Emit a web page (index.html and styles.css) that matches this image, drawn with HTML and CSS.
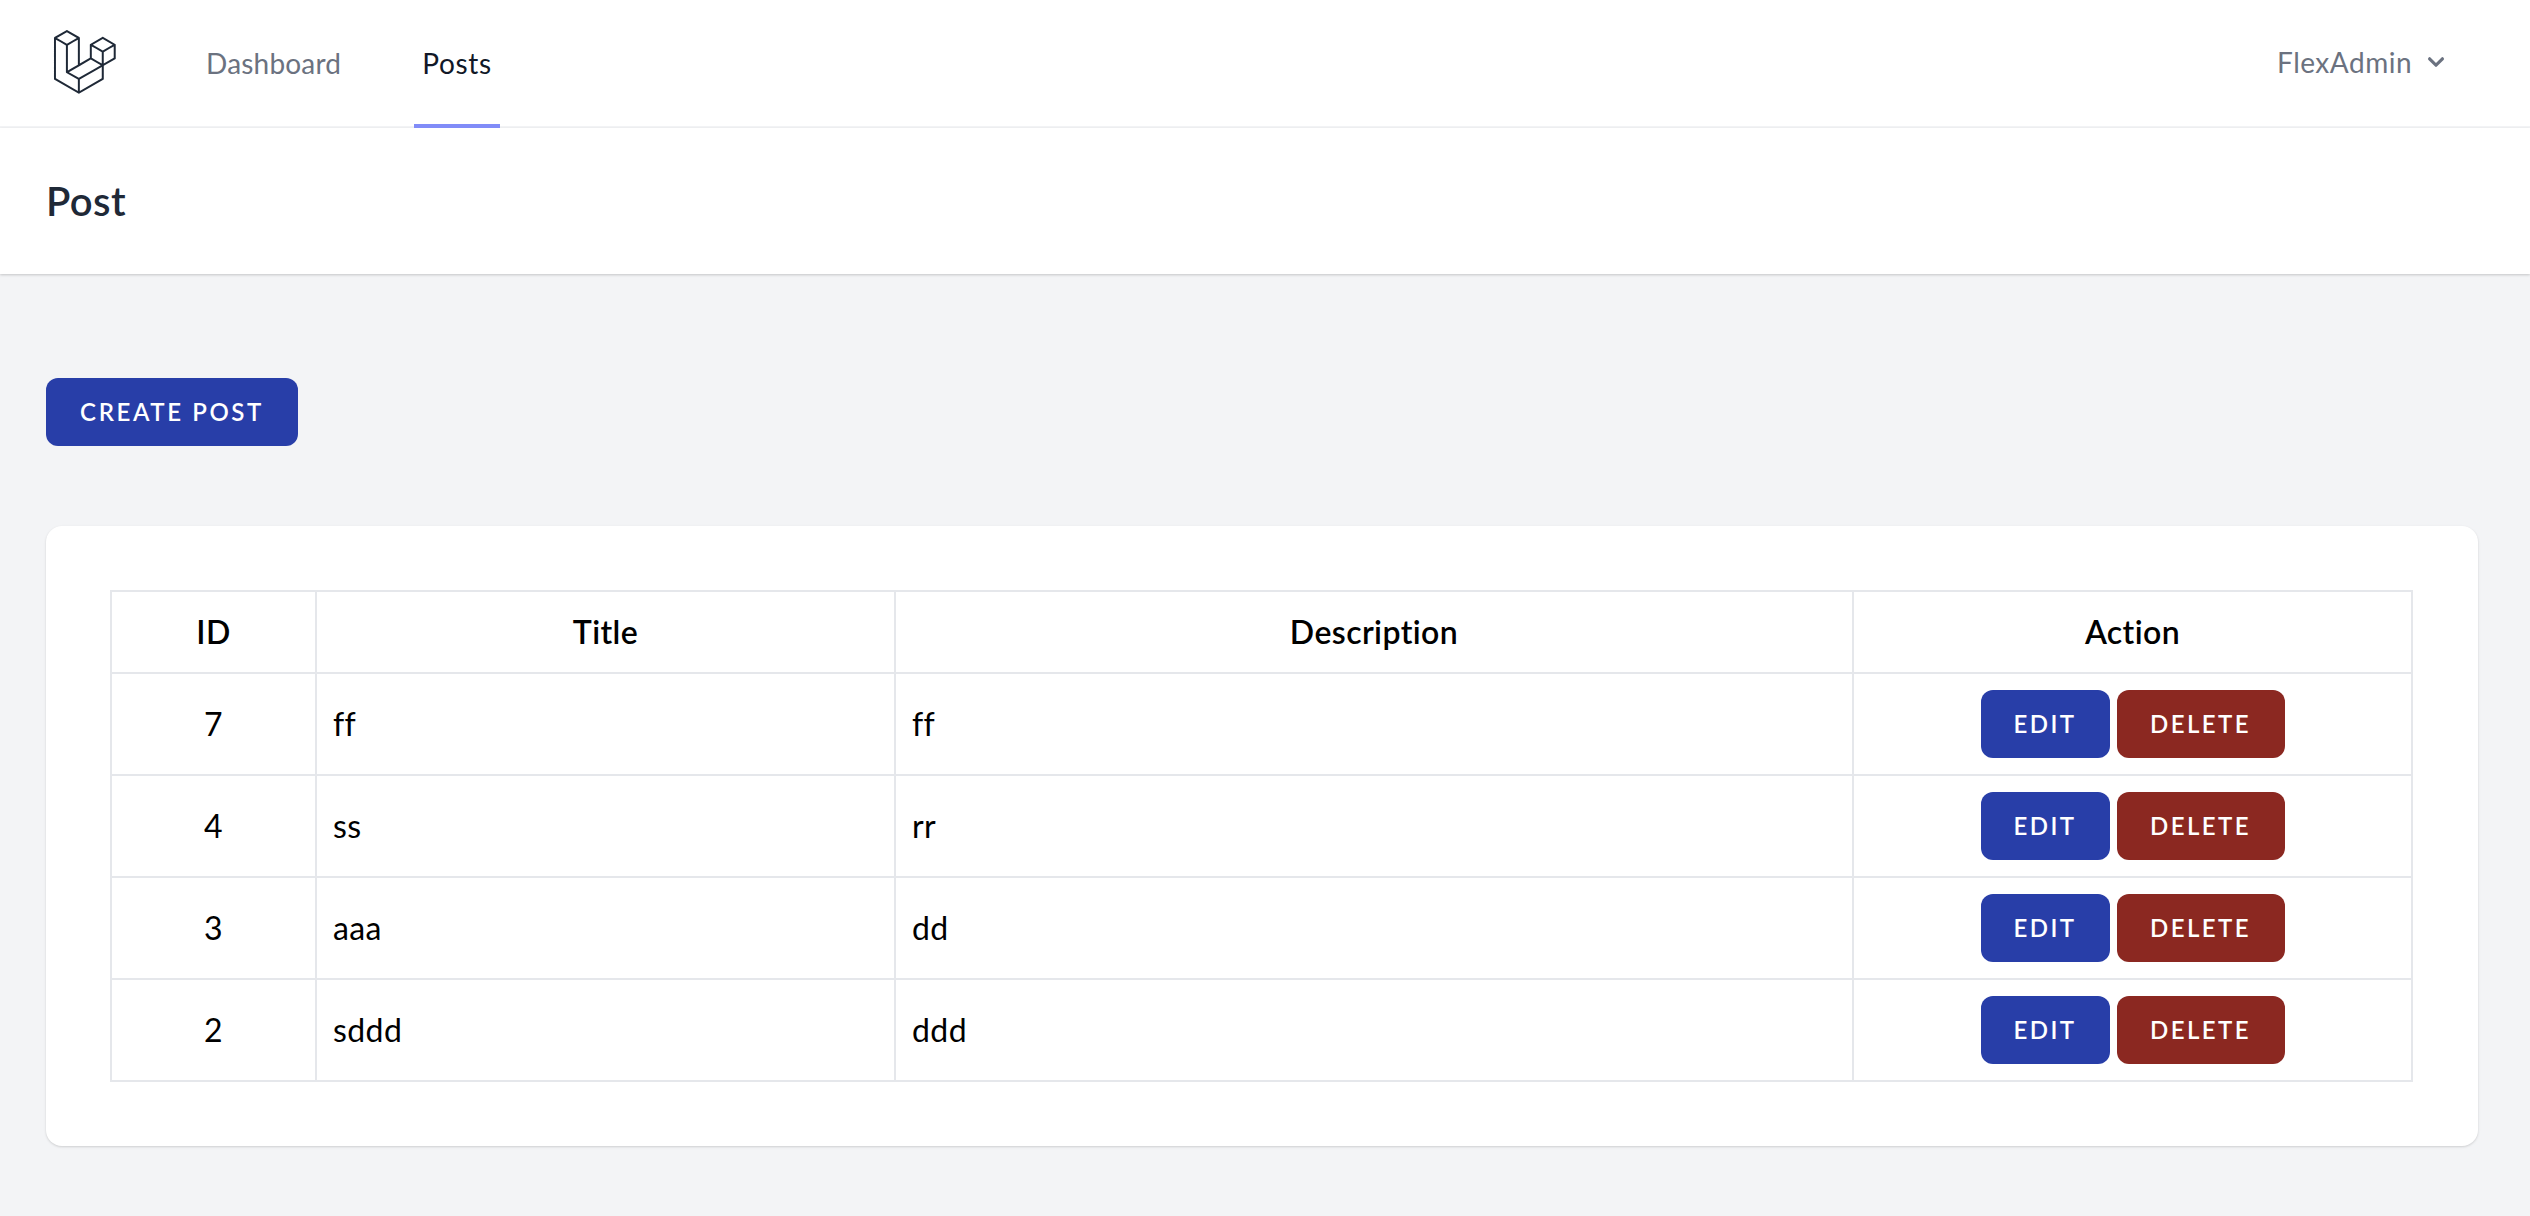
FILE: index.html
```html
<!DOCTYPE html>
<html lang="en">
<head>
<meta charset="utf-8">
<title>Post</title>
<link rel="stylesheet" href="styles.css">
</head>
<body>
<nav class="nav">
  <svg class="logo" viewBox="0 0 316 316" xmlns="http://www.w3.org/2000/svg"><path d="M305.8 81.125C305.77 80.995 305.69 80.885 305.65 80.755C305.56 80.525 305.49 80.285 305.37 80.075C305.29 79.935 305.17 79.815 305.07 79.685C304.94 79.515 304.83 79.325 304.68 79.175C304.55 79.045 304.39 78.955 304.25 78.845C304.09 78.715 303.95 78.575 303.77 78.475L251.32 48.275C249.97 47.495 248.31 47.495 246.96 48.275L194.51 78.475C194.33 78.575 194.19 78.725 194.03 78.845C193.89 78.955 193.73 79.045 193.6 79.175C193.45 79.325 193.34 79.515 193.21 79.685C193.11 79.815 192.99 79.935 192.91 80.075C192.79 80.295 192.71 80.535 192.63 80.755C192.58 80.875 192.51 80.995 192.48 81.125C192.38 81.495 192.33 81.875 192.33 82.265V139.625L148.62 164.795V52.575C148.62 52.185 148.57 51.805 148.47 51.435C148.44 51.305 148.36 51.195 148.32 51.065C148.23 50.835 148.16 50.595 148.04 50.385C147.96 50.245 147.84 50.125 147.74 49.995C147.61 49.825 147.5 49.635 147.35 49.485C147.22 49.355 147.06 49.265 146.92 49.155C146.76 49.025 146.62 48.885 146.44 48.785L93.99 18.585C92.64 17.805 90.98 17.805 89.63 18.585L37.18 48.785C37 48.885 36.86 49.035 36.7 49.155C36.56 49.265 36.4 49.355 36.27 49.485C36.12 49.635 36.01 49.825 35.88 49.995C35.78 50.125 35.66 50.245 35.58 50.385C35.46 50.605 35.38 50.845 35.3 51.065C35.25 51.185 35.18 51.305 35.15 51.435C35.05 51.805 35 52.185 35 52.575V232.235C35 233.795 35.84 235.245 37.19 236.025L142.1 296.425C142.33 296.555 142.58 296.635 142.83 296.725C142.95 296.765 143.06 296.835 143.18 296.865C143.55 296.965 143.93 297.015 144.31 297.015C144.69 297.015 145.07 296.965 145.44 296.865C145.55 296.835 145.65 296.775 145.76 296.735C146.02 296.645 146.28 296.565 146.52 296.425L251.43 236.025C252.79 235.245 253.62 233.805 253.62 232.235V174.875L303.81 145.975C305.17 145.195 306 143.755 306 142.185V82.265C305.95 81.875 305.89 81.495 305.8 81.125ZM144.2 227.205L100.57 202.515L146.39 176.135L196.66 147.195L240.33 172.335L208.29 190.625L144.2 227.205ZM244.75 114.995V164.795L226.39 154.225L201.03 139.625V89.825L219.39 100.395L244.75 114.995ZM249.12 57.105L292.81 82.265L249.12 107.425L205.43 82.265L249.12 57.105ZM114.49 184.425L96.13 194.995V85.305L121.49 70.705L139.85 60.135V169.815L114.49 184.425ZM91.76 27.425L135.45 52.585L91.76 77.745L48.07 52.585L91.76 27.425ZM43.67 60.135L62.03 70.705L87.39 85.305V202.545V202.555V202.565C87.39 202.735 87.44 202.895 87.46 203.055C87.49 203.265 87.49 203.485 87.55 203.695V203.705C87.6 203.875 87.69 204.035 87.76 204.195C87.84 204.375 87.89 204.575 87.99 204.745C87.99 204.745 87.99 204.755 88 204.755C88.09 204.905 88.22 205.035 88.33 205.175C88.45 205.335 88.55 205.495 88.69 205.635L88.7 205.645C88.82 205.765 88.98 205.855 89.12 205.965C89.28 206.085 89.42 206.225 89.59 206.325C89.6 206.325 89.6 206.325 89.61 206.335C89.62 206.335 89.62 206.345 89.63 206.345L139.87 234.775V285.065L43.67 229.705V60.135ZM244.75 229.705L148.58 285.075V234.775L219.8 194.115L244.75 179.875V229.705ZM297.2 139.625L253.49 164.795V114.995L278.85 100.395L297.2 89.825V139.625Z"/></svg>
  <div class="nav-links">
    <a class="nav-link">Dashboard</a>
    <a class="nav-link active">Posts</a>
  </div>
  <div class="user">
    <span>FlexAdmin</span>
    <svg class="chevron" viewBox="0 0 20 20" xmlns="http://www.w3.org/2000/svg"><path fill-rule="evenodd" clip-rule="evenodd" d="M5.293 7.293a1 1 0 011.414 0L10 10.586l3.293-3.293a1 1 0 111.414 1.414l-4 4a1 1 0 01-1.414 0l-4-4a1 1 0 010-1.414z"/></svg>
  </div>
</nav>
<header class="page-header"><h1 class="page-title">Post</h1></header>
<main class="content">
  <a class="btn btn-blue btn-create">CREATE POST</a>
  <section class="card">
    <table class="table">
      <colgroup><col class="col-id"><col class="col-title"><col class="col-desc"><col class="col-action"></colgroup>
      <thead><tr><th>ID</th><th>Title</th><th>Description</th><th>Action</th></tr></thead>
      <tbody>
        <tr><td class="center">7</td><td>ff</td><td>ff</td><td class="center cell-actions"><div class="actions"><a class="btn btn-blue">EDIT</a><a class="btn btn-red">DELETE</a></div></td></tr>
        <tr><td class="center">4</td><td>ss</td><td>rr</td><td class="center cell-actions"><div class="actions"><a class="btn btn-blue">EDIT</a><a class="btn btn-red">DELETE</a></div></td></tr>
        <tr><td class="center">3</td><td>aaa</td><td>dd</td><td class="center cell-actions"><div class="actions"><a class="btn btn-blue">EDIT</a><a class="btn btn-red">DELETE</a></div></td></tr>
        <tr><td class="center">2</td><td>sddd</td><td>ddd</td><td class="center cell-actions"><div class="actions"><a class="btn btn-blue">EDIT</a><a class="btn btn-red">DELETE</a></div></td></tr>
      </tbody>
    </table>
  </section>
</main>
</body>
</html>
```
FILE: styles.css
```css
* { box-sizing: border-box; }
html, body { margin: 0; height: 100%; }
body {
  background: #f3f4f6;
  font-family: "Lato", "Inter", sans-serif;
  font-variant-ligatures: none;
  color: #000;
  overflow: hidden;
}
.nav {
  height: 128px;
  background: #fff;
  border-bottom: 2px solid #f3f4f6;
  display: flex;
  align-items: stretch;
  padding: 0 30px 0 46px;
}
.logo { width: 72px; height: 72px; fill: #1f2937; margin-top: 26px; flex: none; }
.nav-links { display: flex; gap: 65px; margin-left: 80px; }
.nav-link {
  display: flex;
  align-items: center;
  justify-content: center;
  padding: 2px 8px 0;
  height: 128px;
  font-size: 28px;
  letter-spacing: .2px;
  color: #6b7280;
  border-bottom: 4px solid transparent;
}
.nav-link.active { color: #111827; border-bottom-color: #818cf8; letter-spacing: .7px; }
.user {
  margin-left: auto;
  display: flex;
  align-items: center;
  gap: 8px;
  height: 124px;
  font-size: 28px;
  letter-spacing: .5px;
  color: #6b7280;
  padding-right: 48px;
}
.chevron { width: 32px; height: 32px; fill: #6b7280; }
.page-header {
  height: 146px;
  background: #fff;
  display: flex;
  align-items: center;
  padding: 0 46px;
  box-shadow: 0 1px 3px rgba(0,0,0,.12), 0 1px 2px rgba(0,0,0,.08);
}
.page-title { margin: 0; font-size: 40px; font-weight: 600; letter-spacing: .4px; color: #1f2937; }
.content { padding: 104px 52px 0 46px; display: flex; flex-direction: column; align-items: flex-start; }
.btn {
  display: inline-flex;
  align-items: center;
  justify-content: center;
  height: 68px;
  padding-bottom: 2px;
  border-radius: 12px;
  color: #fff;
  font-size: 24px;
  font-weight: 600;
  letter-spacing: 2.6px;
}
.btn-blue { background: #283ea8; }
.btn-red { background: #8b2821; }
.btn-create { width: 252px; }
.card {
  margin-top: 80px;
  width: 100%;
  height: 620px;
  background: #fff;
  border-radius: 16px;
  padding: 64px 65px 64px 64px;
  box-shadow: 0 1px 3px rgba(0,0,0,.1), 0 1px 2px rgba(0,0,0,.06);
}
.table { width: 100%; table-layout: fixed; border-collapse: collapse; }
.col-id { width: 205px; }
.col-title { width: 579px; }
.col-desc { width: 958px; }
.table th, .table td { border: 2px solid #e5e7eb; padding: 0 16px 2px; font-size: 32px; letter-spacing: .4px; }
.table th { height: 82px; font-weight: 600; text-align: center; }
.table td { height: 102px; }
.table td.center { text-align: center; }
.table td.cell-actions { padding-bottom: 0; }
.actions { display: flex; justify-content: center; gap: 7px; }
.actions .btn { letter-spacing: 2.4px; }
.actions .btn-blue { width: 129px; }
.actions .btn-red { width: 168px; }
```
